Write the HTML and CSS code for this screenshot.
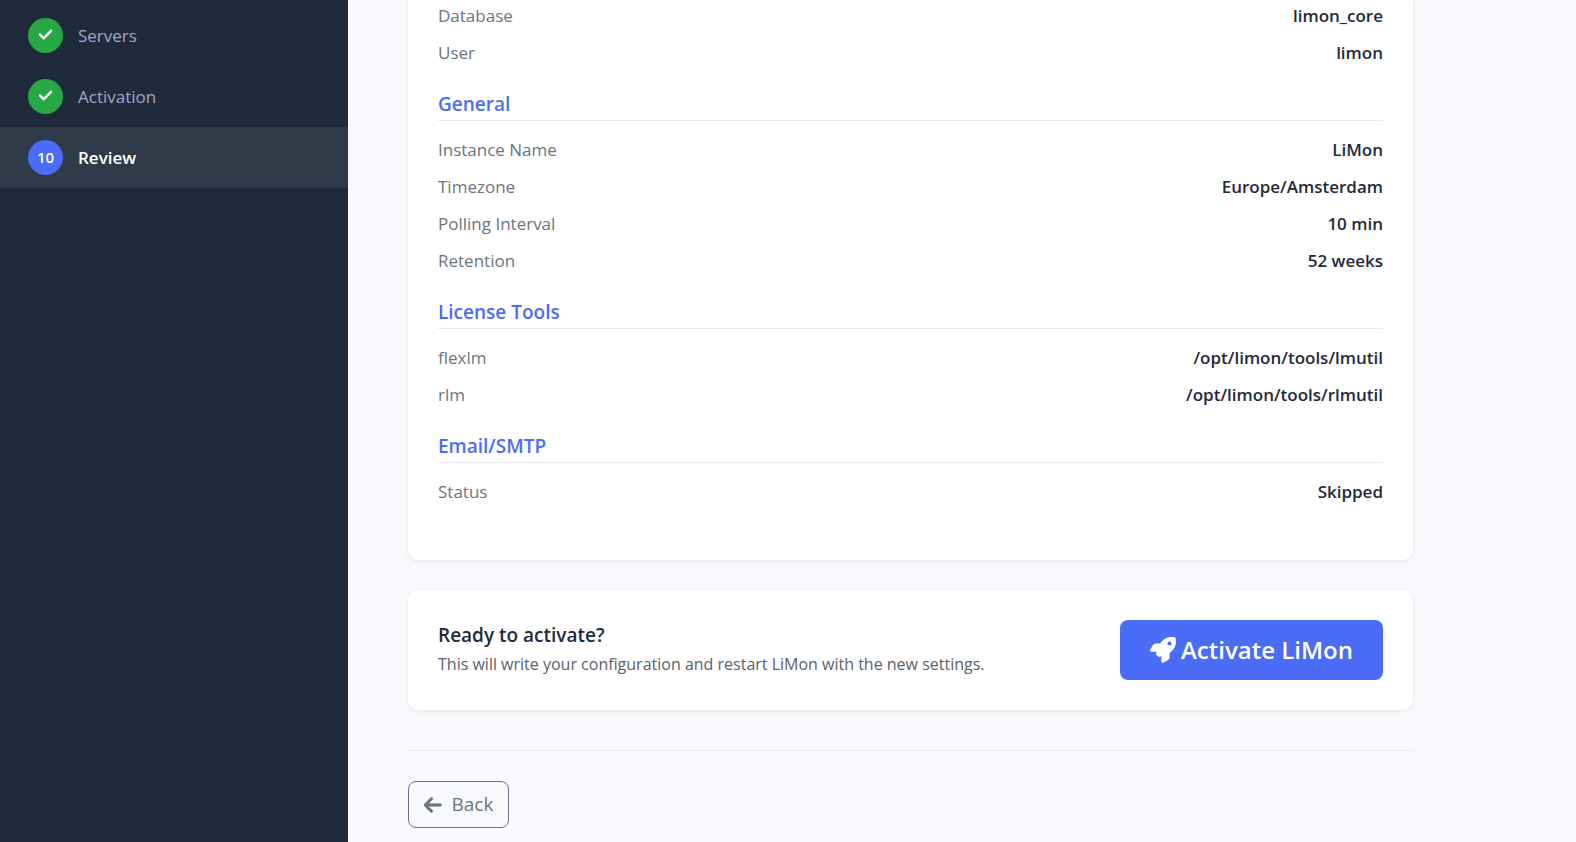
FILE: index.html
```html
<!DOCTYPE html>
<html lang="en">
<head>
    <meta charset="UTF-8">
    <meta name="viewport" content="width=device-width, initial-scale=1.0">
    <title>LiMon Setup</title>
    <link rel="stylesheet" href="styles.css">
</head>
<body>
    <div class="wizard">
        <nav class="sidebar">
            <ol class="steps">
                <li class="step done">
                    <span class="step-badge">
                        <svg class="icon-check" viewBox="0 0 448 512" aria-hidden="true"><path d="M438.6 105.4c12.5 12.5 12.5 32.8 0 45.3l-256 256c-12.5 12.5-32.8 12.5-45.3 0l-128-128c-12.5-12.5-12.5-32.8 0-45.3s32.8-12.5 45.3 0L160 338.7 393.4 105.4c12.5-12.5 32.8-12.5 45.3 0z"/></svg>
                    </span>
                    <span class="step-label">Servers</span>
                </li>
                <li class="step done">
                    <span class="step-badge">
                        <svg class="icon-check" viewBox="0 0 448 512" aria-hidden="true"><path d="M438.6 105.4c12.5 12.5 12.5 32.8 0 45.3l-256 256c-12.5 12.5-32.8 12.5-45.3 0l-128-128c-12.5-12.5-12.5-32.8 0-45.3s32.8-12.5 45.3 0L160 338.7 393.4 105.4c12.5-12.5 32.8-12.5 45.3 0z"/></svg>
                    </span>
                    <span class="step-label">Activation</span>
                </li>
                <li class="step active" aria-current="step">
                    <span class="step-badge">10</span>
                    <span class="step-label">Review</span>
                </li>
            </ol>
        </nav>

        <main class="content">
            <div class="card review-card">
                <section class="review-section">
                    <dl>
                        <div class="review-row"><dt>Database</dt><dd>limon_core</dd></div>
                        <div class="review-row"><dt>User</dt><dd>limon</dd></div>
                    </dl>
                </section>
                <section class="review-section">
                    <h2>General</h2>
                    <dl>
                        <div class="review-row"><dt>Instance Name</dt><dd>LiMon</dd></div>
                        <div class="review-row"><dt>Timezone</dt><dd>Europe/Amsterdam</dd></div>
                        <div class="review-row"><dt>Polling Interval</dt><dd>10 min</dd></div>
                        <div class="review-row"><dt>Retention</dt><dd>52 weeks</dd></div>
                    </dl>
                </section>
                <section class="review-section">
                    <h2>License Tools</h2>
                    <dl>
                        <div class="review-row"><dt>flexlm</dt><dd>/opt/limon/tools/lmutil</dd></div>
                        <div class="review-row"><dt>rlm</dt><dd>/opt/limon/tools/rlmutil</dd></div>
                    </dl>
                </section>
                <section class="review-section">
                    <h2>Email/SMTP</h2>
                    <dl>
                        <div class="review-row"><dt>Status</dt><dd>Skipped</dd></div>
                    </dl>
                </section>
            </div>

            <div class="card activate-card">
                <div class="activate-text">
                    <h3>Ready to activate?</h3>
                    <p>This will write your configuration and restart LiMon with the new settings.</p>
                </div>
                <button type="submit" class="btn btn-primary">
                    <svg class="icon-rocket" viewBox="0 0 512 512" aria-hidden="true"><path d="M156.6 384.9L125.7 354c-8.5-8.5-11.5-20.8-7.7-32.2c3-8.9 7-20.5 11.8-33.8L24 288c-8.6 0-16.6-4.6-20.9-12.1s-4.2-16.7 .2-24.1l52.5-88.5c13-21.9 36.5-35.3 61.9-35.3l82.3 0c2.4-4 4.8-7.7 7.2-11.3C289.1-4.1 411.1-8.1 483.9 5.3c11.6 2.1 20.6 11.2 22.8 22.8c13.4 72.9 9.3 194.8-111.4 276.7c-3.5 2.4-7.3 4.8-11.3 7.2v82.3c0 25.4-13.4 49-35.3 61.9l-88.5 52.5c-7.4 4.4-16.6 4.5-24.1 .2s-12.1-12.2-12.1-20.9V380.8c-14.1 4.9-26.4 8.9-35.7 11.9c-11.2 3.6-23.4 .5-31.8-7.8zM384 168a40 40 0 1 0 0-80 40 40 0 1 0 0 80z"/></svg>
                    Activate LiMon
                </button>
            </div>

            <div class="wizard-footer">
                <button type="button" class="btn btn-outline">
                    <svg class="icon-arrow" viewBox="0 0 448 512" aria-hidden="true"><path d="M9.4 233.4c-12.5 12.5-12.5 32.8 0 45.3l160 160c12.5 12.5 32.8 12.5 45.3 0s12.5-32.8 0-45.3L109.2 288 416 288c17.7 0 32-14.3 32-32s-14.3-32-32-32l-306.7 0L214.6 118.6c12.5-12.5 12.5-32.8 0-45.3s-32.8-12.5-45.3 0l-160 160z"/></svg>
                    Back
                </button>
            </div>
        </main>
    </div>
</body>
</html>
```
FILE: styles.css
```css
* {
    box-sizing: border-box;
}

body {
    margin: 0;
    font-family: "Segoe UI", "Open Sans", "Noto Sans", sans-serif;
    font-size: 17px;
    line-height: 27px;
    color: #1f2a3a;
    background-color: #f8f9fd;
}

h2, h3, p, dl, dd, ol {
    margin: 0;
    padding: 0;
}

svg {
    fill: currentColor;
    flex-shrink: 0;
}

.wizard {
    display: flex;
    min-height: 100vh;
}

/* Sidebar */
.sidebar {
    flex: 0 0 348px;
    padding-top: 5px;
    background-color: #1f2a3a;
}

.steps {
    list-style: none;
}

.step {
    display: flex;
    align-items: center;
    gap: 15px;
    padding: 13px 28px;
    color: #a3a5cb;
}

.step.active {
    background-color: #303b49;
    color: #fff;
    font-weight: 600;
}

.step-badge {
    display: flex;
    align-items: center;
    justify-content: center;
    width: 35px;
    height: 35px;
    border-radius: 50%;
    color: #fff;
    font-size: 15px;
    font-weight: 600;
}

.done .step-badge {
    background-color: #28a745;
}

.active .step-badge {
    background-color: #4a6cf7;
}

.icon-check {
    height: 15px;
    margin-bottom: 2px;
    stroke: currentColor;
    stroke-width: 24;
}

/* Content */
.content {
    flex: 0 1 1125px;
    padding: 0 60px 14px;
}

.card {
    padding: 30px;
    margin-bottom: 30px;
    background-color: #fff;
    border-radius: 10px;
    box-shadow: 0 1px 4px rgba(0, 0, 0, 0.08);
}

.review-card {
    margin-top: -3px;
    padding-top: 0;
    border-radius: 0 0 10px 10px;
}

.review-section {
    margin-bottom: 20px;
}

.review-section h2 {
    margin-bottom: 10px;
    padding-bottom: 2px;
    border-bottom: 1px solid #e9ecef;
    color: #4a6cf7;
    font-size: 19px;
    font-weight: 600;
}

.review-row {
    display: flex;
    justify-content: space-between;
    padding: 5px 0;
}

.review-row dt {
    color: #6c757d;
}

.review-row dd {
    font-weight: 600;
}

.activate-card {
    display: flex;
    align-items: center;
    justify-content: space-between;
    gap: 30px;
    margin-bottom: 40px;
}

.activate-text h3 {
    margin-bottom: 2px;
    font-size: 19px;
    font-weight: 600;
}

.activate-text p {
    color: #5a6169;
    font-size: 16px;
}

.btn {
    display: inline-flex;
    align-items: center;
    justify-content: center;
    font-family: inherit;
    border: 0;
    border-radius: 8px;
    cursor: pointer;
}

.btn-primary {
    gap: 5px;
    padding: 13px 30px;
    background-color: #4a6cf7;
    color: #fff;
    font-size: 24px;
    font-weight: 600;
    line-height: 34px;
}

.btn-outline {
    gap: 10px;
    padding: 8px 15px;
    background-color: transparent;
    border: 1px solid #6f6c90;
    color: #6c757d;
    font-size: 19px;
    line-height: 29px;
}

.icon-rocket {
    height: 26px;
}

.icon-arrow {
    height: 20px;
    stroke: currentColor;
    stroke-width: 16;
}

.wizard-footer {
    padding-top: 30px;
    border-top: 1px solid #e9ecef;
}
```
